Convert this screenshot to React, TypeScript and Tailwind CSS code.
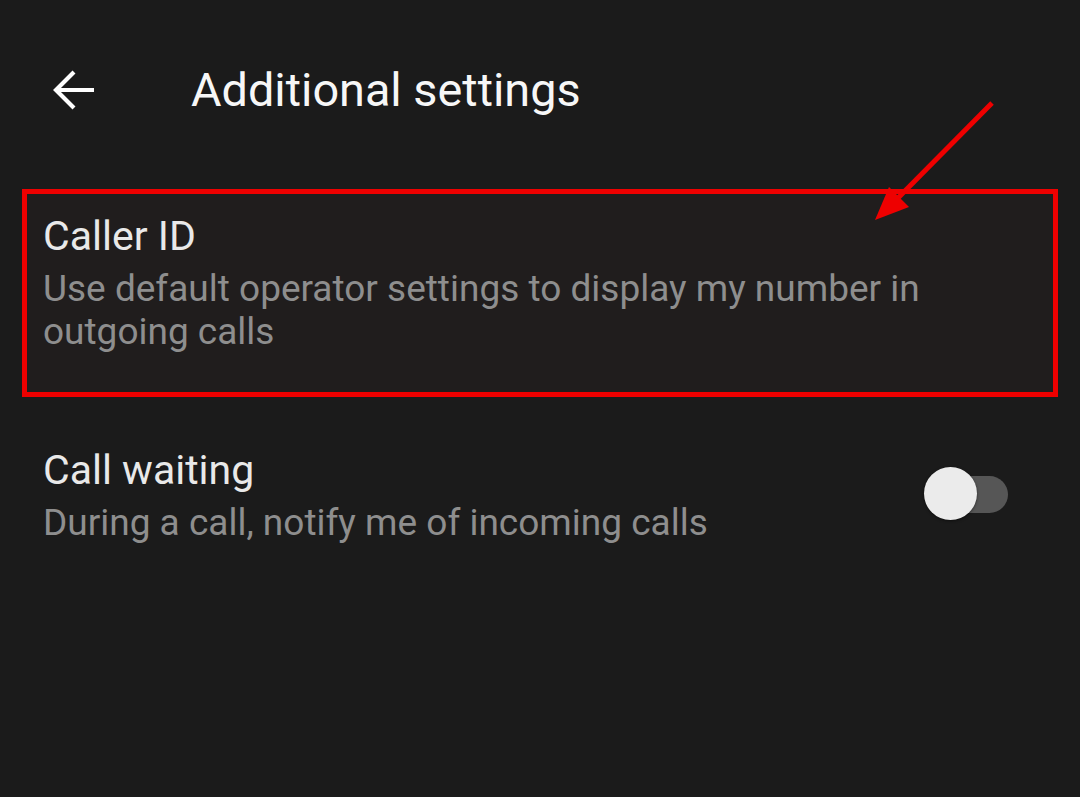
import { useState } from "react";

function BackArrow() {
  return (
    <svg width="44" height="44" viewBox="0 0 44 44" fill="none" aria-hidden="true">
      <path d="M42 22H4M22 4L4 22l18 18" stroke="#ffffff" strokeWidth="4.2" strokeLinecap="butt" strokeLinejoin="miter" />
    </svg>
  );
}

function Toggle({ on, onChange }: { on: boolean; onChange: () => void }) {
  return (
    <button onClick={onChange} className="relative flex h-[54px] w-[84px] shrink-0 items-center" aria-pressed={on}>
      <span className="ml-[6px] h-[37px] w-[78px] rounded-full bg-[#565656]" />
      <span className="absolute left-0 top-0 h-[53px] w-[53px] rounded-full bg-[#ebebeb] shadow-[0_1px_3px_rgba(0,0,0,0.5)]" />
    </button>
  );
}

export default function App() {
  const [waiting, setWaiting] = useState(false);

  return (
    <div className="relative h-[797px] w-full overflow-hidden bg-[#1b1b1b] font-['Roboto',sans-serif]">
      <header className="flex h-[182px] items-center pb-[2px]">
        <div className="ml-[52px] flex w-[139px]">
          <BackArrow />
        </div>
        <h1 className="text-[46.8px] leading-none text-[#f7f7f7]">Additional settings</h1>
      </header>

      <section className="mx-[22px] mt-[7px] h-[208px] border-[5px] border-[#ee0000] bg-[#201d1d] px-[16px] pt-[16px]">
        <p className="text-[41px] leading-[52px] text-[#e9e9e9]">Caller ID</p>
        <p className="mt-[5px] text-[37px] leading-[43px] text-[#8e8e8e]">
          Use default operator settings to display my number in outgoing calls
        </p>
      </section>

      <section className="flex items-center justify-between pl-[43px] pr-[72px] pt-[47px]">
        <div>
          <p className="text-[41px] leading-[52px] text-[#e9e9e9]">Call waiting</p>
          <p className="mt-[5px] text-[37px] leading-[43px] text-[#8e8e8e]">During a call, notify me of incoming calls</p>
        </div>
        <Toggle on={waiting} onChange={() => setWaiting(!waiting)} />
      </section>

      <svg className="pointer-events-none absolute left-0 top-0" width="1080" height="797" aria-hidden="true">
        <line x1="992" y1="103" x2="897" y2="199" stroke="#ee0000" strokeWidth="5" />
        <polygon points="875,220 889,187 909,207" fill="#ee0000" />
      </svg>
    </div>
  );
}
